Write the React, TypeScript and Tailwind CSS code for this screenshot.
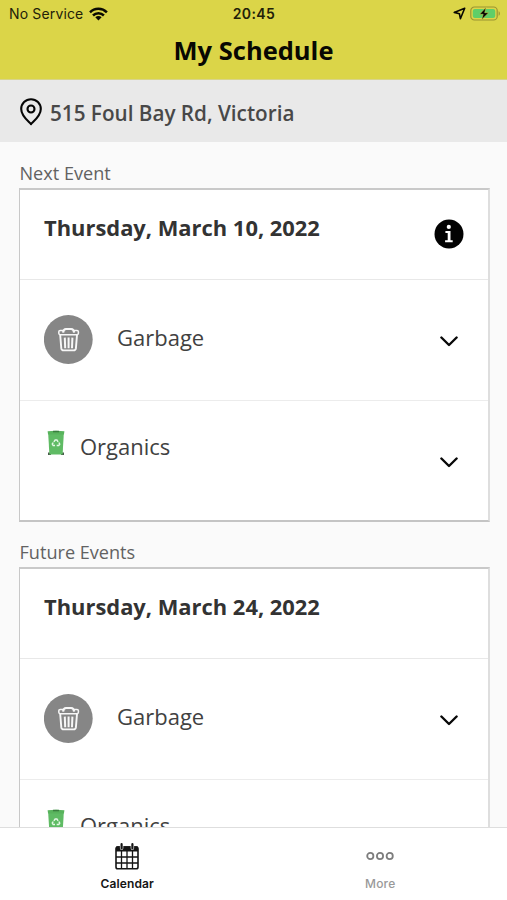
import React from "react";

function WifiIcon() {
  return (
    <svg width="19" height="14" viewBox="0 0 19 14" fill="none" stroke="#0b0b02" strokeWidth="2.5">
      <path d="M1 5.3C5.6.7 13.2.7 17.9 5.3" />
      <path d="M4 8.5c3-3 7.9-3 10.9 0" />
      <path d="M9.45 13.4 6.3 10.3c1.8-1.6 4.5-1.6 6.3 0z" fill="#0b0b02" stroke="none" />
    </svg>
  );
}

function BatteryIcon() {
  return (
    <svg width="31" height="16" viewBox="0 0 31 16">
      <rect x="0.8" y="1" width="26.4" height="13" rx="3.6" fill="none" stroke="#9a9433" strokeWidth="1.2" />
      <rect x="2.8" y="3" width="22.4" height="9" rx="2" fill="#5fce68" />
      <path d="M28.6 5.2c1.7.7 1.7 3.9 0 4.6z" fill="#9a9433" />
      <path d="M16 1.4 9.6 8.3h3.6l-1.6 5.4 7-7h-3.9z" fill="#050505" stroke="#dbd548" strokeWidth="0.5" />
    </svg>
  );
}

function PinIcon() {
  return (
    <svg width="22" height="28" viewBox="0 0 22 28" fill="none" stroke="#050505" strokeWidth="2.1">
      <path d="M11 26.2C9.8 24.4 1.2 18.4 1.2 11a9.8 9.8 0 0 1 19.6 0c0 7.4-8.6 13.4-9.8 15.2z" strokeLinejoin="round" />
      <circle cx="11" cy="11" r="3.5" />
    </svg>
  );
}

function InfoIcon() {
  return (
    <svg width="30" height="30" viewBox="0 0 30 30">
      <circle cx="15" cy="15" r="14.5" fill="#020202" />
      <circle cx="14.8" cy="7.9" r="2.1" fill="#fff" />
      <path d="M11.4 11.9h5.1v9.3h2.2v2h-7.6v-2h2.6v-7.3h-2.3z" fill="#fff" />
    </svg>
  );
}

function TrashBadge() {
  return (
    <svg width="49" height="49" viewBox="0 0 49 49" fill="none" stroke="#f7f7f7">
      <circle cx="24.3" cy="24.5" r="24.4" fill="#868686" stroke="none" />
      <path d="M19.4 15.4h-3.2q-1.4 0-1.4 1.3v1.6q0 1.4 1.4 1.4h16.8q1.4 0 1.4-1.4v-1.6q0-1.3-1.4-1.3h-3.2" strokeWidth="1.5" />
      <path d="M19.1 17.6c.2-2.4 1-3.6 2.9-3.6h5.2c1.9 0 2.7 1.2 2.9 3.6" strokeWidth="2.2" />
      <path d="M16.2 20l1.1 13.4q.3 2 2.4 2h9.8q2.1 0 2.4-2L33 20" strokeWidth="1.9" />
      <path d="M20.8 22.6l.4 10.6M24.6 22.6v10.6M28.4 22.6l-.4 10.6" strokeWidth="2" />
    </svg>
  );
}

function BinIcon() {
  return (
    <svg width="18" height="26" viewBox="0 0 18 26">
      <path d="M1 22.6h3V25H1zM14 22.6h3V25h-3z" fill="#485a4b" />
      <path d="M1.2 3.5h15.6L15.6 24.4H2.4z" fill="#5fbb64" />
      <path d="M.6 1.3Q9 .2 17.4 1.3L16.9 4.6H1.1z" fill="#58b35c" />
      <path d="M6 .8h6v1.5H6z" fill="#397e3e" />
      <g fill="none" stroke="#e3f7e3" strokeWidth="1.5">
        <path d="M6.9 11.9 8.2 9.9h1.7l1.2 1.9" />
        <path d="M11.9 12.5l.8 1.6-1 1.5H9.7" />
        <path d="M8 15.6H6.2l-.9-1.5.9-1.6" />
      </g>
    </svg>
  );
}

function Chevron() {
  return (
    <svg width="18" height="11" viewBox="0 0 18 11" fill="none" stroke="#080808" strokeWidth="2.4" strokeLinecap="round" strokeLinejoin="round">
      <path d="M1.4 1.5 9 9l7.6-7.5" />
    </svg>
  );
}

function CalendarIcon() {
  return (
    <svg width="24" height="27" viewBox="0 0 24 27" fill="none" stroke="#151515">
      <rect x="1" y="4" width="22" height="21.8" rx="1.8" strokeWidth="1.6" />
      <path d="M6.5 8v17M12 8v17M17.5 8v17M1 14h22M1 20h22" strokeWidth="1.3" />
      <path d="M1 4.2Q1 3.2 2 3.2h20q1 0 1 1v4.4H1z" fill="#151515" stroke="none" />
      <path d="M6.6 0v5.2M17.4 0v5.2" stroke="#fff" strokeWidth="3.4" strokeLinecap="round" />
      <path d="M6.6 1.2v4.2M17.4 1.2v4.2" strokeWidth="2.2" strokeLinecap="round" />
    </svg>
  );
}

function EventCard({ date, info }: { date: string; info?: boolean }) {
  return (
    <article className="h-[334px] border-t-2 border-r-2 border-b-2 border-l border-t-[#c9c9c9] border-r-[#dedede] border-b-[#c4c4c4] border-l-[#c8c8c8] bg-white">
      <header className="flex h-[90px] justify-between border-b border-[#e8e8e8] pl-[24px] pr-[24px]">
        <h2 className="pt-[20px] text-[21.9px] leading-[36px] font-bold text-[#333]">{date}</h2>
        {info && <div className="pt-[29px]"><InfoIcon /></div>}
      </header>
      <div className="flex h-[121px] justify-between border-b border-[#ececec] pl-[24px] pr-[30px]">
        <div className="flex">
          <div className="pt-[35px]"><TrashBadge /></div>
          <span className="pt-[39px] pl-[24px] text-[22px] leading-[36px] text-[#414141]">Garbage</span>
        </div>
        <div className="pt-[56px]"><Chevron /></div>
      </div>
      <div className="flex justify-between pl-[26.5px] pr-[30px]">
        <div className="flex">
          <div className="pt-[29px]"><BinIcon /></div>
          <span className="pt-[27px] pl-[15.5px] text-[22px] leading-[36px] text-[#414141]">Organics</span>
        </div>
        <div className="pt-[56px]"><Chevron /></div>
      </div>
    </article>
  );
}

export default function App() {
  return (
    <div className="flex h-[900px] w-[507px] flex-col overflow-hidden bg-[#fafafa] font-['Open_Sans',sans-serif]">
      <header className="h-[80px] shrink-0 border-b border-[#d8d48a] bg-[#dbd548]">
        <div className="grid h-[28px] grid-cols-3 items-center pl-[9px] pr-[6px] pb-[1px] font-['Inter',sans-serif] text-[14px] text-[#222108]">
          <div className="flex items-center gap-[6px] whitespace-nowrap"><span className="tracking-[0.15px]">No Service</span><WifiIcon /></div>
          <div className="pr-[2px] text-center font-semibold tracking-[0.4px]">20:45</div>
          <div className="flex items-center justify-end gap-[4px]">
            <svg width="13" height="13" viewBox="0 0 13 13" fill="none" stroke="#080802" strokeWidth="1.6" strokeLinejoin="round"><path d="M11.7 1.2 1.2 5.4l5.2 1.3 1 5z" /></svg>
            <BatteryIcon />
          </div>
        </div>
        <h1 className="text-center text-[25.5px] leading-[44px] font-bold text-[#080802]">My Schedule</h1>
      </header>
      <div className="flex h-[62px] shrink-0 items-center bg-[#e9e9e9] pl-[20px]">
        <div className="pt-[2px]"><PinIcon /></div>
        <span className="pl-[8px] pt-[6px] text-[20.7px] font-semibold text-[#484848]">515 Foul Bay Rd, Victoria</span>
      </div>
      <main className="min-h-0 flex-1 overflow-hidden pl-[19px] pr-[17px]">
        <h3 className="pt-[17px] pb-[1px] pl-[0.5px] text-[18.1px] leading-[28px] text-[#626262]">Next Event</h3>
        <EventCard date="Thursday, March 10, 2022" info />
        <h3 className="pt-[16px] pb-[1px] pl-[0.5px] text-[18.1px] leading-[28px] text-[#626262]">Future Events</h3>
        <EventCard date="Thursday, March 24, 2022" />
      </main>
      <nav className="grid h-[73px] shrink-0 grid-cols-2 border-t border-[#dedede] bg-white font-['Inter',sans-serif] text-[12px] leading-[16px]">
        <div className="flex flex-col items-center pt-[15px] pl-[1px] font-semibold text-[#151515]">
          <CalendarIcon />
          <span className="pt-[6px] tracking-[0.1px]">Calendar</span>
        </div>
        <div className="flex flex-col items-center pt-[23px] font-medium text-[#999]">
          <svg width="28" height="10" viewBox="0 0 28 10" fill="none" stroke="#7d7d7d" strokeWidth="1.8"><circle cx="4.3" cy="5" r="3.1" /><circle cx="14" cy="5" r="3.1" /><circle cx="23.7" cy="5" r="3.1" /></svg>
          <span className="pt-[15px] tracking-[0.2px]">More</span>
        </div>
      </nav>
    </div>
  );
}
